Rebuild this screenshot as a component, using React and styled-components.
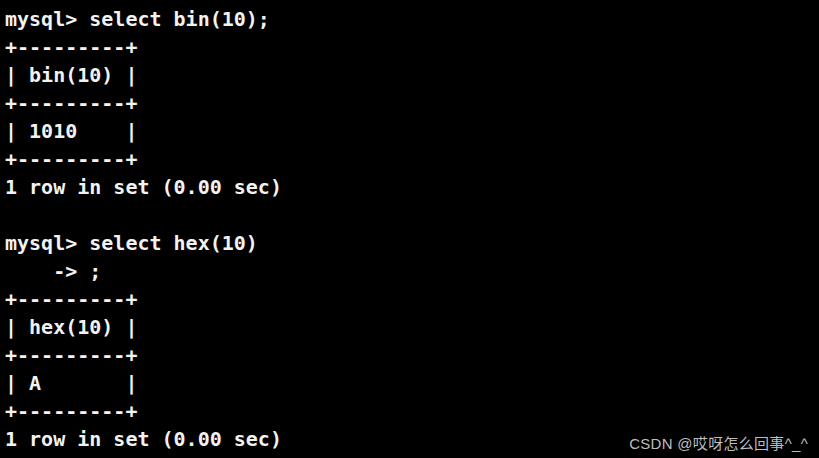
import React from "react";
import styled, { createGlobalStyle } from "styled-components";

const GlobalStyle = createGlobalStyle`
  html, body {
    margin: 0;
    padding: 0;
    background: #000;
  }
`;

const Terminal = styled.div`
  position: relative;
  width: 819px;
  height: 458px;
  overflow: hidden;
  background: #000;
  box-sizing: border-box;
  padding: 5px 0 0 5px;
`;

const Line = styled.pre`
  margin: 0;
  height: 28px;
  line-height: 28px;
  font-family: "DejaVu Sans Mono", "Liberation Mono", monospace;
  font-weight: bold;
  font-size: 20px;
  color: #f2f2f2;
  white-space: pre;
`;

const Watermark = styled.div`
  position: absolute;
  right: 11px;
  bottom: 5px;
  font-family: "Liberation Sans", "Noto Sans CJK SC", sans-serif;
  font-size: 15px;
  color: #bdbdbd;
  letter-spacing: 0.3px;
`;

const lines = [
  "mysql> select bin(10);",
  "+---------+",
  "| bin(10) |",
  "+---------+",
  "| 1010    |",
  "+---------+",
  "1 row in set (0.00 sec)",
  "",
  "mysql> select hex(10)",
  "    -> ;",
  "+---------+",
  "| hex(10) |",
  "+---------+",
  "| A       |",
  "+---------+",
  "1 row in set (0.00 sec)",
];

export default function App() {
  return (
    <>
      <GlobalStyle />
      <Terminal>
        {lines.map((l, i) => (
          <Line key={i}>{l}</Line>
        ))}
        <Watermark>CSDN @哎呀怎么回事^_^</Watermark>
      </Terminal>
    </>
  );
}
